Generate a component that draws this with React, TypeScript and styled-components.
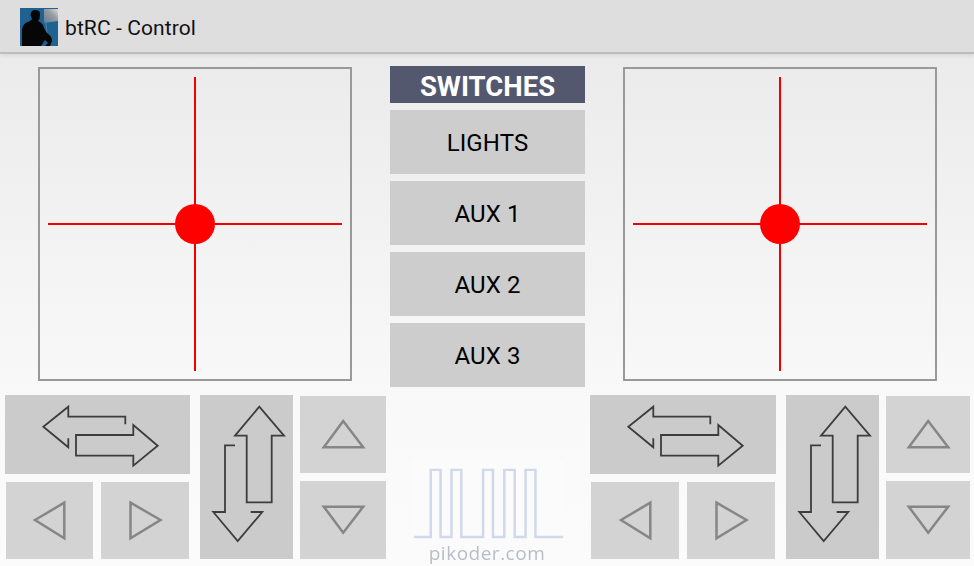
import React from 'react';
import styled, { createGlobalStyle } from 'styled-components';

const GlobalStyle = createGlobalStyle`
  html, body {
    margin: 0;
    padding: 0;
  }

  body {
    font-family: Roboto, "Liberation Sans", sans-serif;
    background: #fafafa;
  }
`;

const SWITCHES = ['LIGHTS', 'AUX 1', 'AUX 2', 'AUX 3'];

const Avatar = () => (
  <AvatarSvg viewBox="0 0 38 38">
    <defs>
      <linearGradient id="avatarWindow" x1="0" y1="1" x2="1" y2="0">
        <stop offset="0" stopColor="#5f7f99" />
        <stop offset="0.6" stopColor="#9a9c9e" />
        <stop offset="1" stopColor="#dcdcdc" />
      </linearGradient>
    </defs>
    <rect width="38" height="38" fill="#1f6191" />
    <path d="M24 1 H38 V13 L24 15 Z" fill="url(#avatarWindow)" />
    <path d="M26 15 L28 38" stroke="#4d86ad" strokeWidth="1" />
    <path
      d="M2 38 L2 21 Q3 15 9 13.5 L12 11.5 L10.5 7 Q11 2 15 2 Q20 2 20 6 L19.5 11 L18 13 Q23 15 24 20 L27 25 Q32 28 32 33 L30 38 Z"
      fill="#060606"
    />
    <path d="M21 38 L25 32 L28 35 L25 38 Z" fill="#1f6191" />
  </AvatarSvg>
);

const Joystick = () => (
  <JoystickBox>
    <svg width="310" height="310" viewBox="0 0 310 310">
      <path d="M8 155 H302 M155 8 V302" stroke="#f00000" strokeWidth="2" fill="none" />
      <circle cx="155" cy="155" r="20" fill="#ff0000" />
    </svg>
  </JoystickBox>
);

const SwapHorizontal = () => (
  <LineIcon width="185" height="79" viewBox="0 0 185 79">
    <path d="M120.3 29.3 V21.7 H63.3 V11.7 L38.3 31.7 L63.3 52.3 V43.3" />
    <path d="M71 40 H128.3 V30 L152.7 50.7 L128.3 70.7 V60.7 H71 Z" />
  </LineIcon>
);

const SwapVertical = () => (
  <LineIcon width="93" height="164" viewBox="0 0 93 164">
    <path d="M46.7 107.3 V40.7 H35 L59.3 11.7 L84 40.7 H71.7 V107.3 Z" />
    <path d="M35 50.3 H25 V117 H13.3 L37.7 146 L62.3 117 H50.7" />
  </LineIcon>
);

const Triangle = ({ points }: { points: string }) => (
  <TriangleIcon width="87" height="78" viewBox="0 0 87 78">
    <polygon points={points} />
  </TriangleIcon>
);

const ControlGroup = ({ wide }: { wide?: boolean }) => (
  <Controls $wide={wide}>
    <BigButton $area="swap">
      <SwapHorizontal />
    </BigButton>
    <SmallPair $wide={wide}>
      <SmallButton>
        <Triangle points="58.3,20.7 29,38 58.3,56.3" />
      </SmallButton>
      <SmallButton>
        <Triangle points="28.5,20.7 58.5,38 28.5,56.3" />
      </SmallButton>
    </SmallPair>
    <BigButton $area="tall">
      <SwapVertical />
    </BigButton>
    <TrimColumn>
      <SmallButton>
        <Triangle points="43.2,25 23.8,51.3 63.2,51.3" />
      </SmallButton>
      <SmallButton>
        <Triangle points="23.8,25.7 63.2,25.7 43.2,51.7" />
      </SmallButton>
    </TrimColumn>
  </Controls>
);

export default function App() {
  return (
    <>
      <GlobalStyle />
      <Page>
        <ActionBar>
          <Avatar />
          <Title>btRC - Control</Title>
        </ActionBar>
        <TopRow>
          <Joystick />
          <SwitchColumn>
            <SwitchHeader>SWITCHES</SwitchHeader>
            {SWITCHES.map((name) => (
              <SwitchButton key={name}>{name}</SwitchButton>
            ))}
          </SwitchColumn>
          <Joystick />
        </TopRow>
        <BottomRow>
          <ControlGroup />
          <Logo>
            <svg width="154" height="82" viewBox="0 0 154 82">
              <path
                d="M1 78 H18 V10 H28 V78 H39 V10 H49 V78 H71 V10 H81 V78 H92.5 V10 H103 V78 H114 V10 H124 V78 H152"
                fill="none"
                stroke="#d0d9e9"
                strokeWidth="2.5"
              />
            </svg>
            <LogoText>pikoder.com</LogoText>
          </Logo>
          <ControlGroup wide />
        </BottomRow>
      </Page>
    </>
  );
}

const Page = styled.div`
  width: 974px;
  height: 566px;
  overflow: hidden;
  background: linear-gradient(#ebebeb 54px, #f9f9f9 400px, #fbfbfb);
`;

const ActionBar = styled.header`
  height: 52px;
  display: flex;
  align-items: center;
  gap: 7px;
  padding-left: 20px;
  background: #dedede;
  border-bottom: 2px solid #bdbdbd;
  box-shadow: 0 2px 4px rgba(0, 0, 0, 0.08);
`;

const AvatarSvg = styled.svg`
  width: 38px;
  height: 38px;
  margin-top: 2px;
`;

const Title = styled.h1`
  margin: 4px 0 0;
  font-size: 21px;
  font-weight: 400;
  letter-spacing: 0.1px;
  color: #111;
`;

const TopRow = styled.section`
  display: grid;
  grid-template-columns: 314px 195px 314px;
  column-gap: 38px;
  padding: 12px 0 0 38px;
  align-items: start;
`;

const JoystickBox = styled.div`
  box-sizing: border-box;
  width: 314px;
  height: 314px;
  margin-top: 1px;
  border: 2px solid #999;

  svg {
    display: block;
  }
`;

const SwitchColumn = styled.div`
  display: flex;
  flex-direction: column;
  gap: 7px;
`;

const SwitchHeader = styled.div`
  height: 37px;
  padding-top: 3px;
  box-sizing: border-box;
  display: flex;
  align-items: center;
  justify-content: center;
  background: #53586f;
  color: #fff;
  font-size: 27.5px;
  font-weight: 700;
`;

const SwitchButton = styled.div`
  height: 64px;
  padding-top: 2px;
  box-sizing: border-box;
  display: flex;
  align-items: center;
  justify-content: center;
  background: #cdcdcd;
  color: #000;
  font-size: 24px;
  letter-spacing: 0.1px;
`;

const BottomRow = styled.section`
  display: grid;
  grid-template-columns: 381px 154px 380px;
  column-gap: 25px;
  padding: 8px 0 0 5px;
  align-items: start;
`;

const Controls = styled.div<{ $wide?: boolean }>`
  display: grid;
  grid-template-columns: ${(p) => (p.$wide ? 186 : 185)}px 10px 93px 7px ${(p) => (p.$wide ? 84 : 86)}px;
  grid-template-rows: 79px 8px 77px;
  grid-template-areas:
    'swap . tall . trim'
    '.    . tall . trim'
    'pair . tall . trim';
`;

const BigButton = styled.div<{ $area: string }>`
  grid-area: ${(p) => p.$area};
  display: flex;
  align-items: center;
  background: #cbcbcb;
`;

const SmallPair = styled.div<{ $wide?: boolean }>`
  grid-area: pair;
  display: grid;
  grid-template-columns: ${(p) => (p.$wide ? 88 : 87)}px 88px;
  column-gap: 8px;
  padding-left: 1px;
`;

const TrimColumn = styled.div`
  grid-area: trim;
  display: grid;
  grid-template-rows: 77px 78px;
  row-gap: 8px;
  padding-top: 1px;
`;

const SmallButton = styled.div`
  display: flex;
  align-items: center;
  justify-content: center;
  overflow: hidden;
  background: #d3d3d3;
`;

const LineIcon = styled.svg`
  display: block;
  flex: none;
  fill: none;
  stroke: #3d3d3d;
  stroke-width: 1.8;
`;

const TriangleIcon = styled.svg`
  display: block;
  flex: none;
  fill: none;
  stroke: #868686;
  stroke-width: 2.5;
  filter: blur(0.3px);
`;

const Logo = styled.div`
  display: flex;
  flex-direction: column;
  align-items: center;
  height: 106px;
  margin-top: 65px;
  margin-left: 1px;
  background: #fbfbfb;

  svg {
    display: block;
    filter: blur(0.5px);
  }
`;

const LogoText = styled.div`
  margin: -1px 3px 0 0;
  font-family: "Open Sans", sans-serif;
  font-size: 19px;
  font-weight: 500;
  letter-spacing: 0.5px;
  color: #b8bdc6;
  filter: blur(0.4px);
`;
